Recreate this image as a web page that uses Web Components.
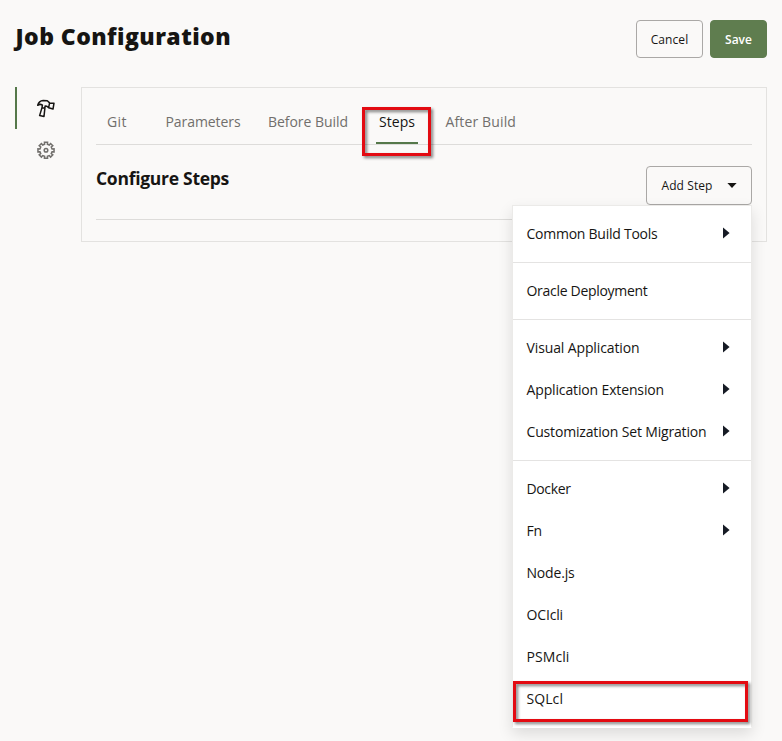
<!DOCTYPE html>
<html lang="en">
<head>
<meta charset="utf-8">
<title>Job Configuration</title>
<style>
  body { margin: 0; background: #faf9f8; color: #161513; font-family: "Open Sans", "Noto Sans", sans-serif; width: 782px; height: 741px; overflow: hidden; }
</style>
</head>
<body>
<job-page></job-page>
<script>
const define = (name, markup, ready) => {
  const t = document.createElement('template');
  t.innerHTML = markup;
  customElements.define(name, class extends HTMLElement {
    constructor() {
      super();
      this.attachShadow({ mode: 'open' }).append(t.content.cloneNode(true));
    }
    connectedCallback() { if (ready) ready(this); }
  });
};

// A one-line label whose tracking is set so that it fills the given width.
define('fit-label', `
  <style>:host { display: inline-block; white-space: nowrap; } span { display: inline-block; }</style>
  <span><slot></slot></span>`, el => {
  const want = parseFloat(el.getAttribute('width'));
  const span = el.shadowRoot.querySelector('span');
  const n = el.textContent.length;
  const have = span.getBoundingClientRect().width;
  span.style.letterSpacing = ((want - have) / n) + 'px';
  el.style.width = want + 'px';
});

define('action-button', `
  <style>
    :host { display: flex; box-sizing: border-box; height: 38px; align-items: center; justify-content: center; border: 1px solid #aaa8a6; border-radius: 4px; font-size: 12px; font-weight: 500; line-height: 16px; padding-top: 1px; }
    :host([primary]) { background: #5f7d4f; border-color: #5f7d4f; color: #fff; font-weight: 600; }
  </style>
  <slot></slot>`);

define('red-frame', `
  <style>:host { position: absolute; box-sizing: border-box; border: 3px solid #e30b12; filter: drop-shadow(2px 2px 1.5px rgba(0,0,0,.5)); pointer-events: none; }</style>`);

define('page-header', `
  <style>
    :host { display: flex; justify-content: space-between; align-items: flex-start; padding: 20px 15px 0 15.5px; height: 87px; box-sizing: border-box; }
    h1 { margin: 0; font-size: 23px; line-height: 32px; font-weight: 800; }
    .actions { display: flex; gap: 7px; }
    .cancel { width: 67px; } .save { width: 57px; }
  </style>
  <h1><fit-label width="215.5">Job Configuration</fit-label></h1>
  <div class="actions">
    <action-button class="cancel"><fit-label width="37.5">Cancel</fit-label></action-button>
    <action-button class="save" primary><fit-label width="27">Save</fit-label></action-button>
  </div>`);

define('side-rail', `
  <style>
    :host { display: flex; flex-direction: column; width: 66px; }
    div { height: 42px; display: flex; align-items: center; box-sizing: border-box; padding-left: 19px; border-left: 2px solid transparent; }
    div.on { border-color: #55784a; }
    svg { width: 20px; height: 20px; fill: none; display: block; }
  </style>
  <div class="on"><svg viewBox="0 0 20 20" stroke="#161513" stroke-width="1.5" stroke-linejoin="round">
    <path d="M1.7 7.3 Q3 2.9 7.1 2.6 L11.3 2.8 L13.6 4.9 L18 5.2 L17 11 L12.6 9.8 L10.9 8.3 L9.1 8.1 L8 18.4 L3.6 17.6 L6 9.6 L6.4 7.2 Q4.2 5.5 1.7 7.3 Z M13.6 4.9 L12.6 9.8 M6 9.8 L9 10.3"/></svg></div>
  <div><svg class="gear" viewBox="0 0 20 20" stroke="#716f6c" stroke-width="1.5"></svg></div>`, el => {
  // Eight-toothed cog outline, four corners per tooth.
  let d = '';
  for (let i = 0; i < 8; i++) {
    for (const [a, r] of [[-13, 6.2], [-11, 8.2], [11, 8.2], [13, 6.2]]) {
      const q = (i * 45 + a) * Math.PI / 180;
      d += (d ? 'L' : 'M') + (10 + r * Math.cos(q)).toFixed(2) + ' ' + (10.3 + r * Math.sin(q)).toFixed(2);
    }
  }
  el.shadowRoot.querySelector('.gear').innerHTML = '<path d="' + d + 'Z"/><circle cx="10" cy="10.3" r="1.8"/>';
});

define('tab-item', `
  <style>
    :host { display: flex; box-sizing: border-box; height: 40px; padding: 8px 3px 0; color: #716f6c; font-size: 14px; line-height: 20px; border-bottom: 2px solid transparent; }
    :host([active]) { color: #161513; border-color: #55784a; }
  </style>
  <slot></slot>`);

define('tab-bar', `
  <style>
    :host { display: flex; height: 57px; box-sizing: border-box; padding: 16px 0 0 8px; border-bottom: 1px solid #dddcda; }
    .a { margin-left: 32.5px; } .b { margin-left: 21.5px; } .c { margin-left: 25px; } .d { margin-left: 24.5px; }
  </style>
  <tab-item><fit-label width="20">Git</fit-label></tab-item>
  <tab-item class="a"><fit-label width="75">Parameters</fit-label></tab-item>
  <tab-item class="b"><fit-label width="80">Before Build</fit-label></tab-item>
  <tab-item class="c" active><fit-label width="36">Steps</fit-label></tab-item>
  <tab-item class="d"><fit-label width="70.5">After Build</fit-label></tab-item>`);

define('menu-row', `
  <style>
    :host { display: flex; height: 42px; align-items: center; justify-content: space-between; padding: 0 21.5px 0 13.5px; font-size: 14px; line-height: 20px; font-weight: 400; }
    svg { display: none; width: 7px; height: 12px; margin-bottom: 2px; }
    :host([sub]) svg { display: block; }
  </style>
  <slot></slot><svg viewBox="0 0 7 12"><path d="M0 .6 L6.6 6 L0 11.4Z" fill="#161b25"/></svg>`);

define('step-menu', `
  <style>
    :host { position: absolute; left: 512px; top: 205px; width: 238px; background: #fff; border: 1px solid #ebeae8; border-bottom-color: #fff; padding: 7px 0; box-shadow: 0 6px 14px rgba(0,0,0,.12); }
    hr { border: 0; height: 1px; background: #e4e3e2; margin: 7px 0; }
    red-frame { left: 0; top: 475px; width: 235px; height: 41px; }
  </style>
  <menu-row sub><fit-label width="131">Common Build Tools</fit-label></menu-row><hr>
  <menu-row><fit-label width="121">Oracle Deployment</fit-label></menu-row><hr>
  <menu-row sub><fit-label width="113">Visual Application</fit-label></menu-row>
  <menu-row sub><fit-label width="137.5">Application Extension</fit-label></menu-row>
  <menu-row sub><fit-label width="180">Customization Set Migration</fit-label></menu-row><hr>
  <menu-row sub><fit-label width="44">Docker</fit-label></menu-row>
  <menu-row sub><fit-label width="15.5">Fn</fit-label></menu-row>
  <menu-row><fit-label width="48">Node.js</fit-label></menu-row>
  <menu-row><fit-label width="36.5">OCIcli</fit-label></menu-row>
  <menu-row><fit-label width="43">PSMcli</fit-label></menu-row>
  <menu-row><fit-label width="36.5">SQLcl</fit-label></menu-row>
  <red-frame></red-frame>`);

define('config-panel', `
  <style>
    :host { display: block; box-sizing: border-box; width: 686px; height: 155px; padding: 0 14px; border: 1px solid #e3e2e0; }
    .bar { display: flex; justify-content: space-between; height: 75px; box-sizing: border-box; border-bottom: 1px solid #dddcda; }
    h2 { margin: 20px 0 0; font-size: 17.5px; line-height: 26px; font-weight: 700; }
    action-button { width: 106px; height: 39px; margin-top: 21px; gap: 14px; }
    svg { width: 10px; height: 7px; margin-top: -2px; }
  </style>
  <tab-bar></tab-bar>
  <div class="bar">
    <h2><fit-label width="133">Configure Steps</fit-label></h2>
    <action-button><fit-label width="51">Add Step</fit-label><svg viewBox="0 0 10 7"><path d="M.4 1 H9.6 L5 6Z" fill="#161513"/></svg></action-button>
  </div>`);

define('job-page', `
  <style>
    :host { display: block; position: relative; width: 782px; height: 741px; overflow: hidden; }
    main { display: flex; padding-left: 15px; }
    red-frame { left: 362px; top: 107px; width: 69px; height: 49px; }
  </style>
  <page-header></page-header>
  <main><side-rail></side-rail><config-panel></config-panel></main>
  <step-menu></step-menu>
  <red-frame></red-frame>`);
</script>
</body>
</html>
